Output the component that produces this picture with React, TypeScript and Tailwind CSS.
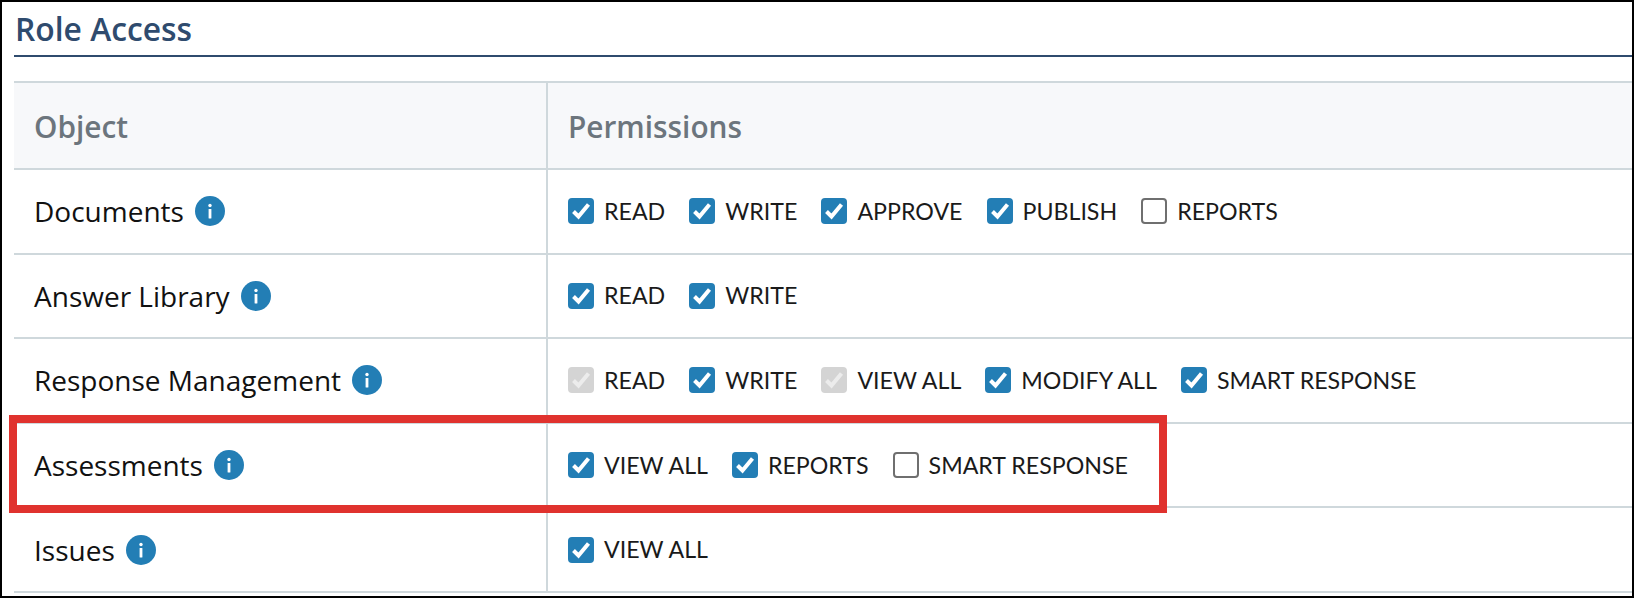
const rows = [
  {
    name: "Documents",
    perms: [
      { label: "READ", state: "on" },
      { label: "WRITE", state: "on" },
      { label: "APPROVE", state: "on" },
      { label: "PUBLISH", state: "on" },
      { label: "REPORTS", state: "off" },
    ],
  },
  {
    name: "Answer Library",
    perms: [
      { label: "READ", state: "on" },
      { label: "WRITE", state: "on" },
    ],
  },
  {
    name: "Response Management",
    perms: [
      { label: "READ", state: "disabled" },
      { label: "WRITE", state: "on" },
      { label: "VIEW ALL", state: "disabled" },
      { label: "MODIFY ALL", state: "on" },
      { label: "SMART RESPONSE", state: "on" },
    ],
  },
  {
    name: "Assessments",
    perms: [
      { label: "VIEW ALL", state: "on" },
      { label: "REPORTS", state: "on" },
      { label: "SMART RESPONSE", state: "off" },
    ],
  },
  {
    name: "Issues",
    perms: [{ label: "VIEW ALL", state: "on" }],
  },
];

const InfoIcon = () => (
  <svg width="30" height="30" viewBox="0 0 30 30" className="shrink-0">
    <circle cx="15" cy="15" r="15" fill="#237eb5" />
    <circle cx="15" cy="9.5" r="1.7" fill="#fff" />
    <rect x="13.6" y="13" width="2.8" height="9.5" rx="0.6" fill="#fff" />
  </svg>
);

const Checkbox = ({ state }: { state: string }) => {
  if (state === "off") {
    return <span className="block w-[26px] h-[26px] shrink-0 rounded-[4px] border-2 border-[#6f6f6f] bg-white" />;
  }

  const disabled = state === "disabled";
  return (
    <span className={`flex items-center justify-center w-[26px] h-[26px] shrink-0 rounded-[4px] ${disabled ? "bg-[#d4d4d4]" : "bg-[#237eb5]"}`}>
      <svg width="26" height="26" viewBox="0 0 26 26">
        <path d="M5.5 13.5l5 5L20.5 6.5" fill="none" stroke={disabled ? "#ececec" : "#fff"} strokeWidth="4" />
      </svg>
    </span>
  );
};

export default function App() {
  return (
    <div className="w-[1634px] h-[598px] border-2 border-black bg-white overflow-hidden font-['Open_Sans',sans-serif]">
      <div className="pl-3 pt-[7px]">
        <h2 className="h-[48px] pl-px text-[31.8px] leading-[40px] font-semibold text-[#2f4b6e] border-b-2 border-[#2f4b6e]">Role Access</h2>

        <div className="relative mt-[24px] border-t-2 border-[#cfd8dc]">
          <div className="flex h-[87px] bg-[#f7f8fa] border-b-2 border-[#cfd8dc] text-[29.8px] font-semibold text-[#6c757d]">
            <div className="flex items-center w-[534px] pl-[20px] pt-[3px] border-r-2 border-[#cfd8dc]">Object</div>
            <div className="flex items-center pl-[20px] pt-[3px]">Permissions</div>
          </div>

          {rows.map((row) => (
            <div key={row.name} className="flex h-[84.6px] border-b-2 border-[#cfd8dc]">
              <div className="flex items-center gap-[11px] w-[534px] pl-[20px] border-r-2 border-[#cfd8dc] text-[28px] text-[#111]">
                {row.name}
                <InfoIcon />
              </div>
              <div className="flex items-center gap-[24px] pl-[20px] font-['Lato',sans-serif] text-[23.2px] text-[#1a1a1a]">
                {row.perms.map((perm) => (
                  <div key={perm.label} className="flex items-center gap-[10px]">
                    <Checkbox state={perm.state} />
                    {perm.label}
                  </div>
                ))}
              </div>
            </div>
          ))}

          {/* red highlight drawn over the Assessments row */}
          <div className="absolute left-[-5px] top-[332px] w-[1158px] h-[98px] border-8 border-[#e0322e]" />
        </div>
      </div>
    </div>
  );
}
